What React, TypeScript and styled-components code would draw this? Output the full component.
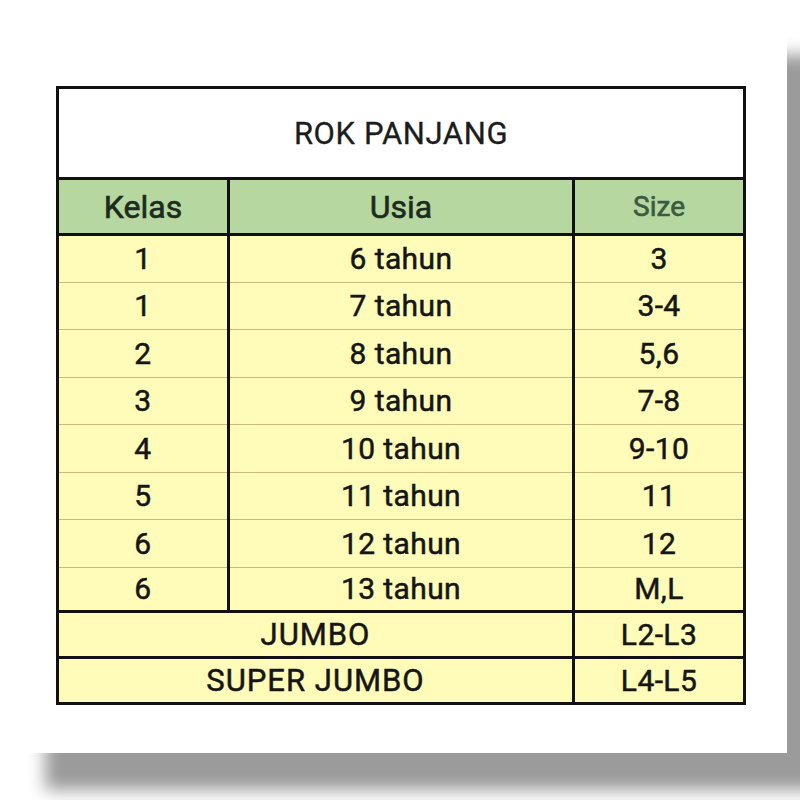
import styled, { createGlobalStyle } from "styled-components";

const GlobalStyle = createGlobalStyle`
  html, body {
    margin: 0;
    padding: 0;
    background: #ffffff;
    overflow: hidden;
  }
  body {
    font-family: Roboto, "Liberation Sans", Arial, sans-serif;
  }
`;

const rows = [
  { kelas: "1", usia: "6 tahun", size: "3" },
  { kelas: "1", usia: "7 tahun", size: "3-4" },
  { kelas: "2", usia: "8 tahun", size: "5,6" },
  { kelas: "3", usia: "9 tahun", size: "7-8" },
  { kelas: "4", usia: "10 tahun", size: "9-10" },
  { kelas: "5", usia: "11 tahun", size: "11" },
  { kelas: "6", usia: "12 tahun", size: "12" },
  { kelas: "6", usia: "13 tahun", size: "M,L" },
];

const extras = [
  { label: "JUMBO", size: "L2-L3" },
  { label: "SUPER JUMBO", size: "L4-L5" },
];

export default function App() {
  return (
    <>
      <GlobalStyle />
      <Page>
        <Card>
          <Table>
            <colgroup>
              <col style={{ width: 171 }} />
              <col style={{ width: 345 }} />
              <col style={{ width: 171 }} />
            </colgroup>
            <tbody>
              <TitleRow>
                <TitleCell colSpan={3}>ROK PANJANG</TitleCell>
              </TitleRow>
              <HeadRow>
                <HeadCell>Kelas</HeadCell>
                <HeadCell>Usia</HeadCell>
                <HeadCell $muted>Size</HeadCell>
              </HeadRow>
              {rows.map((r, i) => (
                <DataRow key={`row${i}`} $last={i === rows.length - 1}>
                  <Cell>{r.kelas}</Cell>
                  <Cell>{r.usia}</Cell>
                  <Cell>{r.size}</Cell>
                </DataRow>
              ))}
              {extras.map((e) => (
                <ExtraRow key={e.label}>
                  <Cell colSpan={2} $caps>
                    {e.label}
                  </Cell>
                  <Cell>{e.size}</Cell>
                </ExtraRow>
              ))}
            </tbody>
          </Table>
        </Card>
      </Page>
    </>
  );
}

const Page = styled.div`
  width: 800px;
  height: 800px;
  padding: 18px 0 0 5px;
  box-sizing: border-box;
`;

const Card = styled.div`
  width: 782px;
  height: 735px;
  box-sizing: border-box;
  padding: 68px 0 0 51px;
  background: #ffffff;
  box-shadow: 40px 37px 16px #9b9b9b;
`;

const Table = styled.table`
  width: 688px;
  table-layout: fixed;
  border-collapse: collapse;
  border: 3px solid #111111;
  color: #151515;
`;

const TitleRow = styled.tr`
  height: 91px;
`;

const TitleCell = styled.td`
  background: #ffffff;
  text-align: center;
  font-size: 31px;
  letter-spacing: 0.6px;
  color: #1c1c1c;
  -webkit-text-stroke: 0.3px #1c1c1c;
  border-bottom: 3px solid #111111;
  padding: 0;
`;

const HeadRow = styled.tr`
  height: 56px;
  background: #b6d8a0;
`;

const HeadCell = styled.td<{ $muted?: boolean }>`
  text-align: center;
  padding: 0;
  font-size: ${(p) => (p.$muted ? "28px" : "32px")};
  color: ${(p) => (p.$muted ? "#3c5a42" : "#1b2c1d")};
  -webkit-text-stroke: 0.6px ${(p) => (p.$muted ? "#3c5a42" : "#1b2c1d")};
  border-left: 3px solid #111111;
  border-bottom: 3px solid #111111;
`;

const DataRow = styled.tr<{ $last?: boolean }>`
  height: ${(p) => (p.$last ? "44px" : "47.5px")};
  background: #fffbb9;

  & > td {
    border-bottom: ${(p) => (p.$last ? "3px solid #111111" : "1.5px solid #cdb884")};
  }
`;

const Cell = styled.td<{ $caps?: boolean }>`
  text-align: center;
  padding: 0;
  font-size: ${(p) => (p.$caps ? "31px" : "30px")};
  letter-spacing: ${(p) => (p.$caps ? "1px" : "0.4px")};
  -webkit-text-stroke: 0.5px #151515;
  border-left: 3px solid #111111;
`;

const ExtraRow = styled.tr`
  height: 46px;
  background: #fffbb9;

  & > td {
    border-bottom: 3px solid #111111;
  }
`;
